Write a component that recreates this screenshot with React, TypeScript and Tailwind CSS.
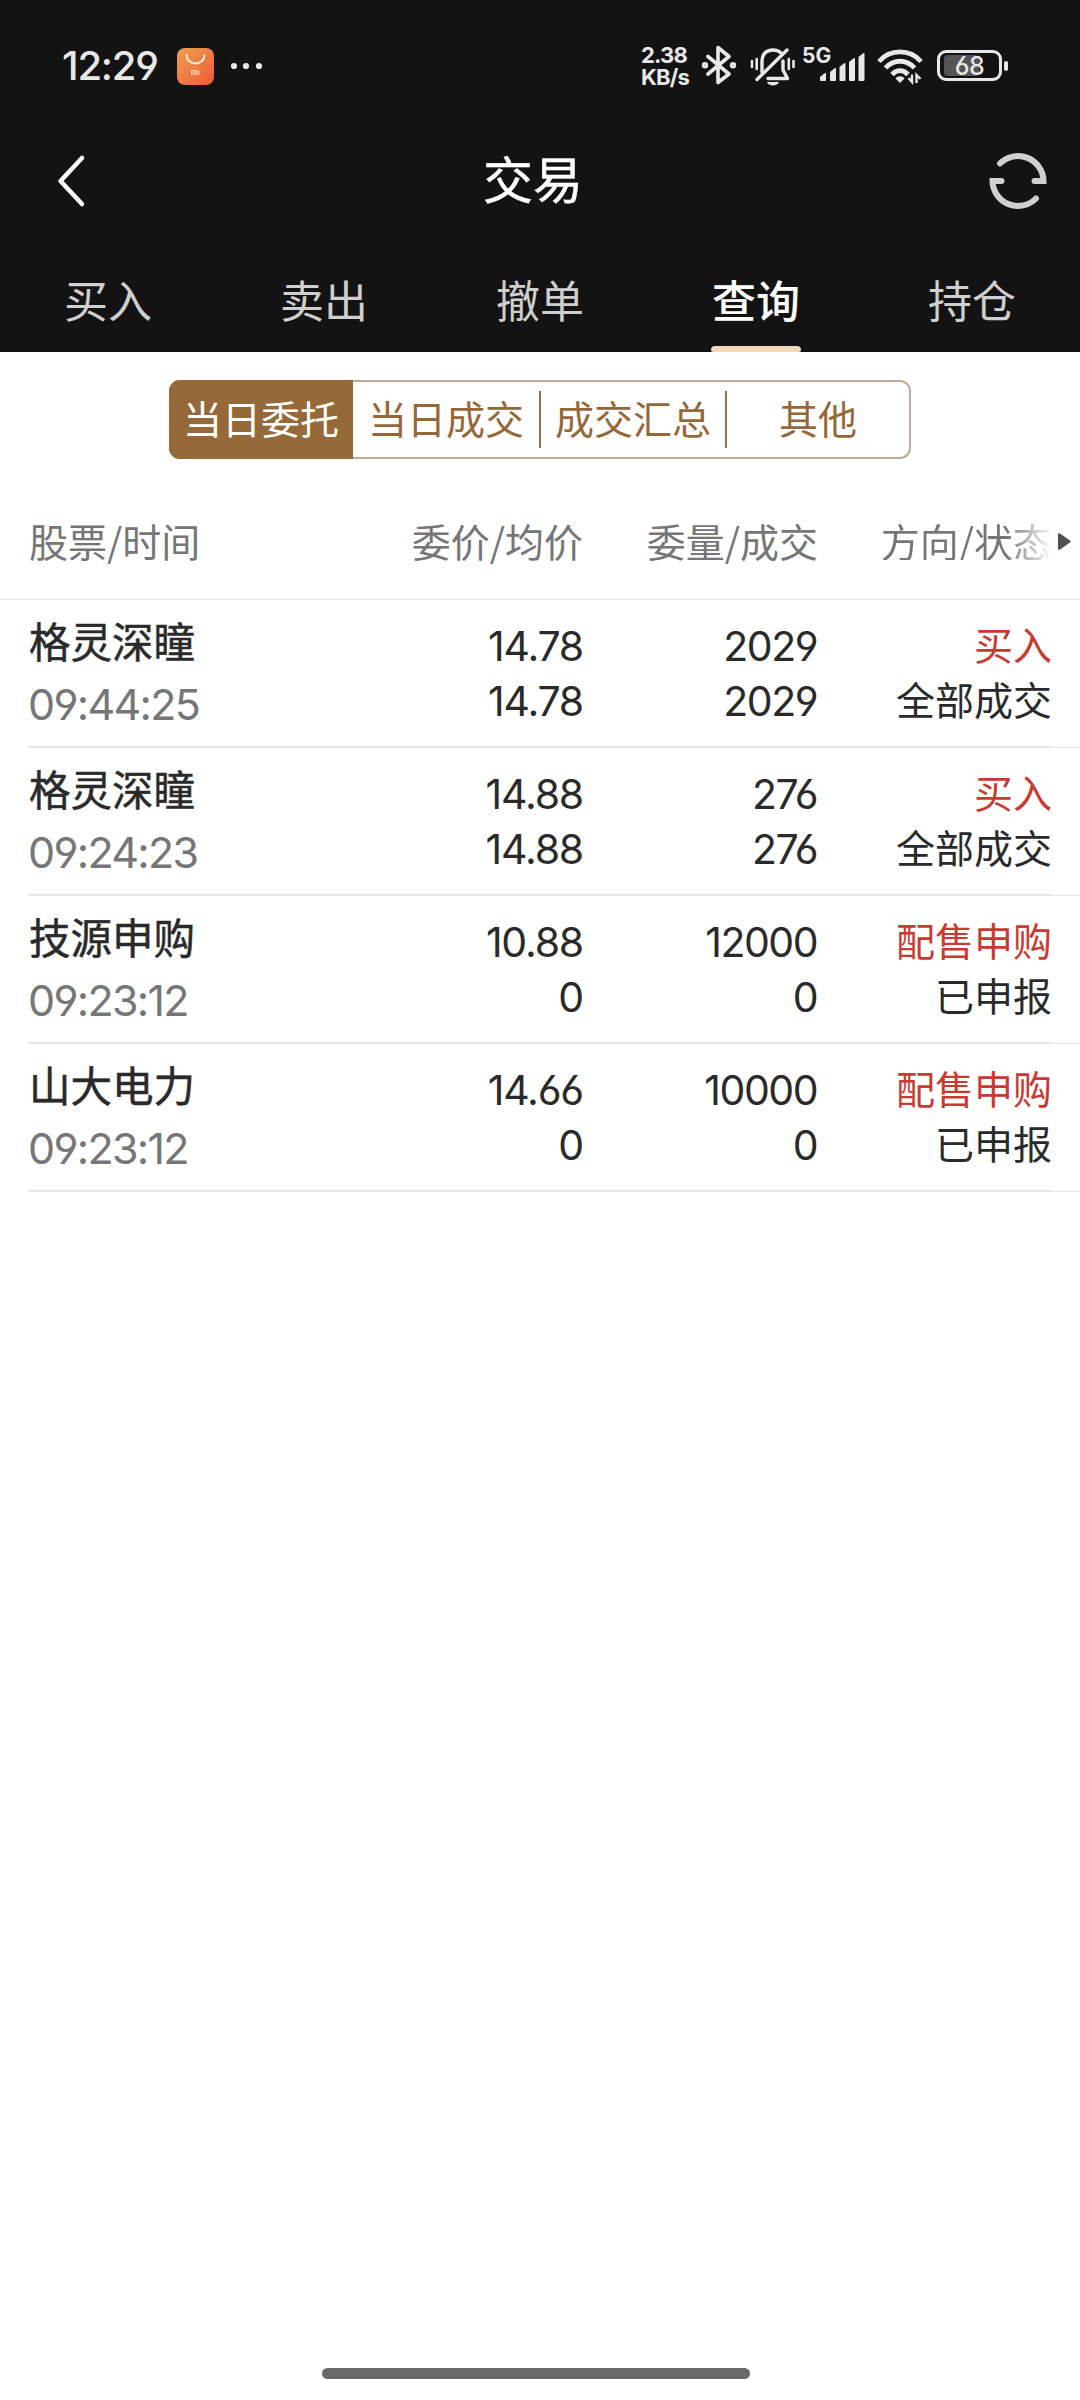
import React, { useState } from 'react';

interface Order {
  name: string;
  time: string;
  price: string;
  avgPrice: string;
  amount: string;
  filled: string;
  direction: string;
  status: string;
}

const TABS = ['买入', '卖出', '撤单', '查询', '持仓'];
const FILTERS = ['当日委托', '当日成交', '成交汇总', '其他'];

const ORDERS: Order[] = [
  { name: '格灵深瞳', time: '09:44:25', price: '14.78', avgPrice: '14.78', amount: '2029', filled: '2029', direction: '买入', status: '全部成交' },
  { name: '格灵深瞳', time: '09:24:23', price: '14.88', avgPrice: '14.88', amount: '276', filled: '276', direction: '买入', status: '全部成交' },
  { name: '技源申购', time: '09:23:12', price: '10.88', avgPrice: '0', amount: '12000', filled: '0', direction: '配售申购', status: '已申报' },
  { name: '山大电力', time: '09:23:12', price: '14.66', avgPrice: '0', amount: '10000', filled: '0', direction: '配售申购', status: '已申报' },
];

const StatusBar: React.FC = () => (
  <div className="h-[130px] flex items-start text-[#e8e8e8]">
    <div className="ml-[62px] mt-[46px] w-[115px] h-10 leading-10 text-[40px] font-medium tracking-[-1.2px]">12:29</div>
    <svg className="mt-12 shrink-0" width="37" height="37" viewBox="0 0 37 37" fill="none">
      <defs>
        <linearGradient id="shop" x1="0" y1="0" x2="1" y2="1">
          <stop offset="0" stopColor="#f0a050" />
          <stop offset="1" stopColor="#ee5a38" />
        </linearGradient>
      </defs>
      <rect width="37" height="37" rx="8" fill="url(#shop)" />
      <path d="M9.5 6.5c0 12 18 12 18 0" stroke="#fff0dc" strokeWidth="1.8" />
      <path d="M14.6 27v-4.4h3.6V27M16.5 24.2V27M19.8 22.4V27M22 22.4V27" stroke="#fcd9b8" strokeWidth="1.1" />
    </svg>
    <svg className="ml-4 mt-[62px] shrink-0" width="34" height="8" fill="currentColor">
      <circle cx="4" cy="4" r="3.1" />
      <circle cx="16" cy="4" r="3.1" />
      <circle cx="29" cy="4" r="3.1" />
    </svg>

    <div className="ml-auto mt-[44px] w-[59px] text-[22px] leading-[22px] font-bold tracking-[-0.8px]">
      <div className="h-[22px]">2.38</div>
      <div className="h-[22px]">KB/s</div>
    </div>
    <svg className="mt-[45px] shrink-0" width="38" height="40" viewBox="0 0 38 40" fill="none" stroke="currentColor" strokeWidth="3.6" strokeLinecap="round" strokeLinejoin="round">
      <path d="M8 11.5 29 29 18 37.5V2.5L29 11.5 8 29" />
      <circle cx="5" cy="20.2" r="1.4" />
      <circle cx="33" cy="20.2" r="1.4" />
    </svg>
    <svg className="ml-[12px] mt-[45px] shrink-0" width="46" height="42" viewBox="0 0 46 42" fill="none" stroke="currentColor" strokeWidth="3.4" strokeLinecap="round" strokeLinejoin="round">
      <path d="M12 27V17C12 9 16 5 23 5c3 0 5.5 .8 7.5 2.5" />
      <path d="M37 5 7 34.5" />
      <path d="M18 33.5h19.5l-4.5-8.5V16" />
      <path d="M17 37h12c-1 4.5-11 4.5-12 0Z" fill="currentColor" stroke="none" />
      <path d="M2 16v6M6.7 14v10M43.5 16v6M38.8 14v10" strokeWidth="2.6" />
    </svg>
    <div className="relative ml-[6px] mt-[45px] w-[66px] h-10 shrink-0">
      <div className="absolute left-0 top-0 text-[21px] leading-[21px] font-bold">5G</div>
      <svg className="absolute left-[17px] top-[7px]" width="47" height="30" fill="currentColor">
        <path d="M1 25l5-4q1-.5 1 1v6q0 1-1 1H2q-1 0-1-1ZM11 20l5-4q1-.5 1 1v11q0 1-1 1h-4q-1 0-1-1ZM20.5 15l5-4q1-.5 1 1v16q0 1-1 1h-4q-1 0-1-1ZM30 10l5-4q1-.5 1 1v21q0 1-1 1h-4q-1 0-1-1ZM39.5 5l5-4q1-.5 1 1v26q0 1-1 1h-4q-1 0-1-1Z" />
      </svg>
    </div>
    <svg className="ml-[7px] mt-[45px] shrink-0" width="50" height="40" viewBox="0 0 50 40" fill="none" stroke="currentColor" strokeWidth="4.8">
      <path d="M4 16.5c11-12.8 31-12.8 42 0" />
      <path d="M10.5 23c8-9 21-9 29 0" />
      <path d="M17 29.5c5-5 11-5 16 0" />
      <path d="m25 38-4.5-4.5c2-3 7-3 9 0Z" fill="currentColor" stroke="none" />
      <path d="M37 29.5V37l-3.5-4M41.5 38v-8l4 4" strokeWidth="2.4" />
    </svg>
    <div className="relative ml-[12px] mr-[71px] mt-[50px] w-[72px] h-[31px] shrink-0">
      <div className="relative w-[65px] h-[31px] rounded-[9px] border-[3px] border-[#e8e8e8] flex items-center justify-center text-[25px] font-medium tracking-[-0.5px]">
        <div className="absolute left-1 top-[2px] h-[21px] w-[35px] rounded-[4px] bg-[#555]" />
        <span className="relative top-px">68</span>
      </div>
      <div className="absolute left-[67px] top-[11px] h-[10px] w-[4px] rounded-full bg-[#e8e8e8]" />
    </div>
  </div>
);

const TitleBar: React.FC = () => (
  <div className="h-[101px] pl-[55px] pr-[30px] grid grid-cols-[64px_1fr_64px] items-center">
    <svg width="32" height="56" viewBox="0 0 32 56" fill="none" stroke="#fff" strokeWidth="4.5" strokeLinecap="round" strokeLinejoin="round">
      <path d="M27 5 5.5 28 27 51" />
    </svg>
    <h1 className="pr-[39px] text-center text-[50px] leading-none text-white [-webkit-text-stroke:0.5px]">交易</h1>
    <svg width="64" height="64" viewBox="0 0 64 64" fill="none" stroke="#d0d0d0" strokeWidth="6" strokeLinecap="round">
      <path d="M14 14.5A25.5 25.5 0 0 1 57.5 32H48.5" />
      <path d="M50 49.5A25.5 25.5 0 0 1 6.5 32H15.5" />
    </svg>
  </div>
);

const App: React.FC = () => {
  const [tab, setTab] = useState('查询');
  const [filter, setFilter] = useState('当日委托');

  return (
    <div className="w-[1080px] h-[2400px] bg-white flex flex-col overflow-hidden font-['Inter','Noto_Sans_CJK_SC',sans-serif] [font-feature-settings:'cv03','cv04']">
      <header className="h-[352px] bg-[#131313] shrink-0">
        <StatusBar />
        <TitleBar />
        <nav className="grid grid-cols-5 h-[121px]">
          {TABS.map((t) => (
            <button key={t} onClick={() => setTab(t)} className="flex flex-col items-center justify-end">
              <span className={`text-[44px] leading-[60px] mb-[14px] ${t === tab ? 'text-white font-medium' : 'text-[#cfcfcf]'}`}>{t}</span>
              <span className={`w-[90px] h-[6px] rounded-t-[4px] rounded-b-[2px] ${t === tab ? 'bg-[#f5d8bc]' : ''}`} />
            </button>
          ))}
        </nav>
      </header>

      <div className="mt-7 mx-[169px] h-[79px] grid grid-cols-[182px_188px_186px_1fr] border-2 border-[#bfac94] rounded-[11px] shrink-0">
        {FILTERS.map((f, i) => (
          <button
            key={f}
            onClick={() => setFilter(f)}
            className={`flex items-center text-[39px] leading-none ${
              f === filter ? 'bg-[#966939] text-white -my-[2px] -ml-[2px] rounded-l-[11px]' : 'text-[#95683a]'
            }`}
          >
            <span className="flex-1 text-center">{f}</span>
            {f !== filter && i < FILTERS.length - 1 && <i className="w-[2px] h-[57px] bg-[#94734d]" />}
          </button>
        ))}
      </div>

      <div className="h-[141px] pt-[23px] shrink-0 flex items-center border-b border-[#e5e5e5] text-[39px] leading-none text-[#767676] font-['Noto_Sans_CJK_SC',sans-serif]">
        <div className="w-[283px] pl-[29px]">股票/时间</div>
        <div className="w-[300px] text-right">委价/均价</div>
        <div className="w-[235px] text-right">委量/成交</div>
        <div className="w-[234px] text-right text-transparent bg-clip-text bg-linear-to-r from-[#767676] from-80% to-white">方向/状态</div>
        <svg className="ml-1 mt-[3px]" width="16" height="20" viewBox="0 0 16 20" fill="#505050">
          <path d="M2 2.5q0-2 2-1l10 7q1.5 1 0 2l-10 7q-2 1-2-1Z" />
        </svg>
      </div>

      {ORDERS.map((o, i) => (
        <div key={i} className="h-[148px] shrink-0 flex text-[#2a2a2a]">
          <div className="w-7" />
          <div className="w-[1024px] flex border-b-2 border-[#e6e6e6]">
            <div className="w-[255px]">
              <div className="mt-[13px] pl-px text-[41.5px] leading-[60px] [-webkit-text-stroke:0.5px]">{o.name}</div>
              <div className="mt-px text-[43px] leading-[60px] text-[#767676] tracking-[-1.7px]">{o.time}</div>
            </div>
            <div className="w-[300px] pt-[19px] text-right text-[41px] leading-[54.5px] tracking-[-1.2px]">
              <div>{o.price}</div>
              <div>{o.avgPrice}</div>
            </div>
            <div className="w-[235px] pt-[19px] pr-px text-right text-[41px] leading-[54.5px] tracking-[-1.5px]">
              <div>{o.amount}</div>
              <div>{o.filled}</div>
            </div>
            <div className="w-[234px] pt-[19px] text-right text-[39px] leading-[54.5px]">
              <div className="text-[#c93a32]">{o.direction}</div>
              <div>{o.status}</div>
            </div>
          </div>
          <div className="flex-1 border-b border-[#e6e6e6]" />
        </div>
      ))}

      <div className="mt-auto mb-[21px] ml-[322px] w-[428px] h-[11px] rounded-full bg-[#696969] shrink-0" />
    </div>
  );
};

export default App;
